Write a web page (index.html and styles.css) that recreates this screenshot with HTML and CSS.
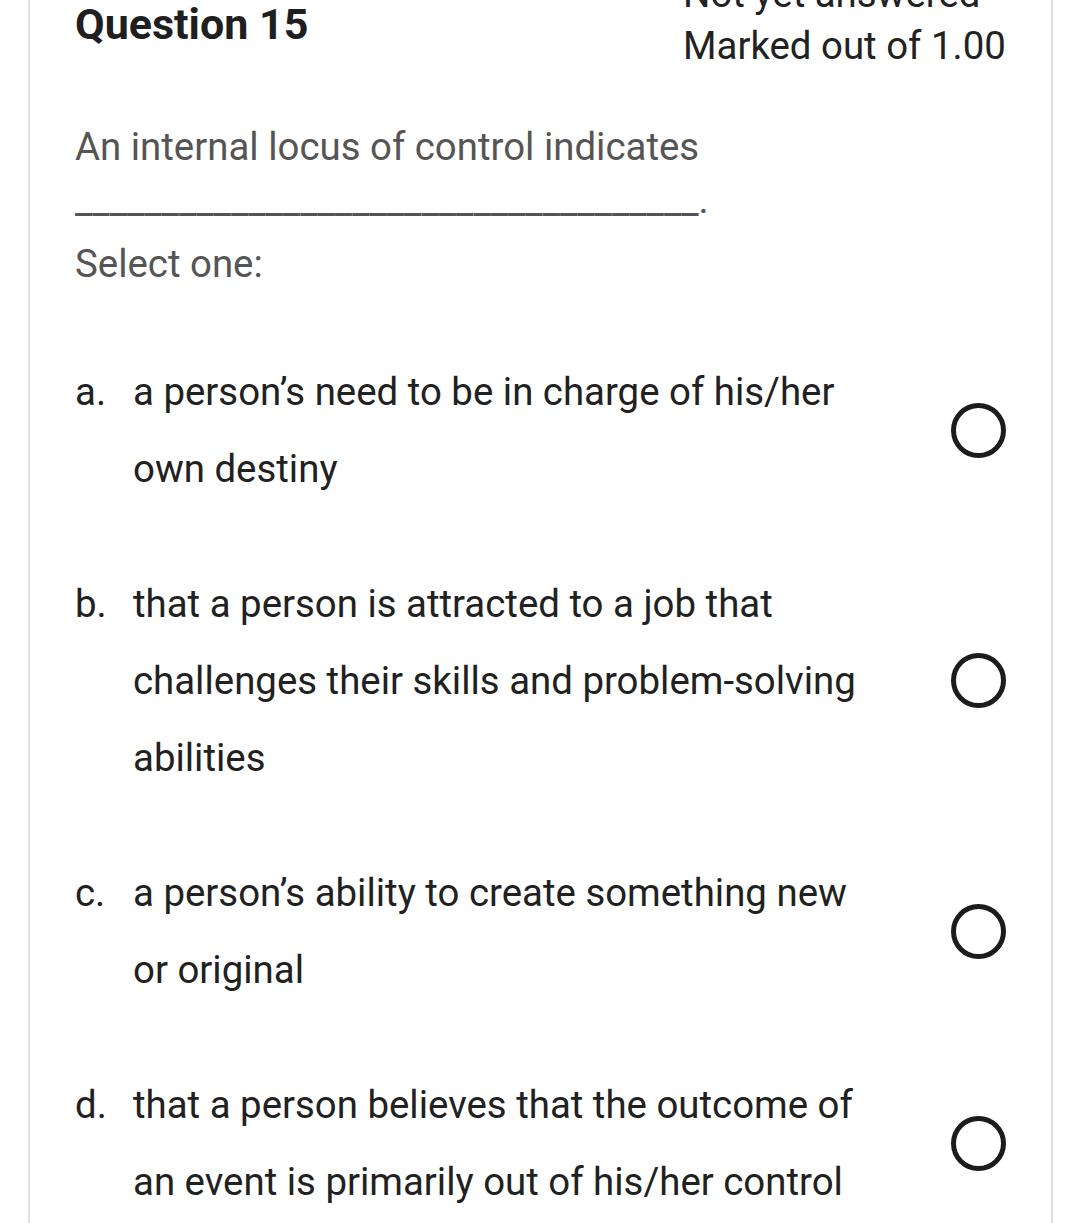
FILE: index.html
```html
<!DOCTYPE html>
<html lang="en">
<head>
  <meta charset="UTF-8">
  <meta name="viewport" content="width=device-width, initial-scale=1">
  <title>Question 15</title>
  <link rel="stylesheet" href="styles.css">
</head>
<body>
  <div class="que">
    <div class="que-info">
      <h3 class="que-no">Question 15</h3>
      <div class="que-state">
        <div>Not yet answered</div>
        <div>Marked out of 1.00</div>
      </div>
    </div>

    <div class="que-text">An internal locus of control indicates ____________________________________.</div>
    <div class="prompt">Select one:</div>

    <div class="answers">
      <label class="answer">
        <span class="answer-no">a.</span>
        <span class="answer-text">a person’s need to be in charge of his/her own destiny</span>
        <span class="radio"></span>
      </label>
      <label class="answer">
        <span class="answer-no">b.</span>
        <span class="answer-text">that a person is attracted to a job that challenges their skills and problem-solving abilities</span>
        <span class="radio"></span>
      </label>
      <label class="answer">
        <span class="answer-no">c.</span>
        <span class="answer-text">a person’s ability to create something new or original</span>
        <span class="radio"></span>
      </label>
      <label class="answer">
        <span class="answer-no">d.</span>
        <span class="answer-text">that a person believes that the outcome of an event is primarily out of his/her control</span>
        <span class="radio"></span>
      </label>
    </div>
  </div>
</body>
</html>
```

FILE: styles.css
```css
*, *::before, *::after { margin: 0; padding: 0; box-sizing: border-box; }
body {
  font-family: Roboto, "Liberation Sans", sans-serif;
  background: #fff;
  color: #212121;
  font-size: 38.4px;
  overflow: hidden;
}
/* question card, page is scrolled a little so the top is cut off */
.que {
  margin: -52px 27px 0 28px;
  padding: 20px 45px 60px;
  border-left: 2px solid #dedede;
  border-right: 2px solid #dedede;
}
.que-info {
  display: flex;
  justify-content: space-between;
  align-items: flex-start;
}
.que-no {
  font-size: 43px;
  font-weight: 700;
  line-height: 52px;
  color: #1f1f1f;
  margin-top: 30px;
}
.que-state {
  line-height: 52px;
  color: #222;
  width: 323px;
}
.que-text {
  margin-top: 48px;
  line-height: 53px;
  color: #555;
}
.prompt {
  margin-top: 11px;
  line-height: 53px;
  color: #555;
}
.answers {
  margin-top: 63px;
  display: flex;
  flex-direction: column;
  gap: 58px;
}
.answer {
  display: flex;
  align-items: center;
  line-height: 77px;
  color: #212121;
}
.answer-no {
  width: 58px;
  flex: none;
  align-self: flex-start;
}
.answer-text {
  width: 750px;
  flex: none;
}
.radio {
  margin-left: auto;
  width: 55px;
  height: 55px;
  border: 5px solid #1c1c1c;
  border-radius: 50%;
  flex: none;
}
```
